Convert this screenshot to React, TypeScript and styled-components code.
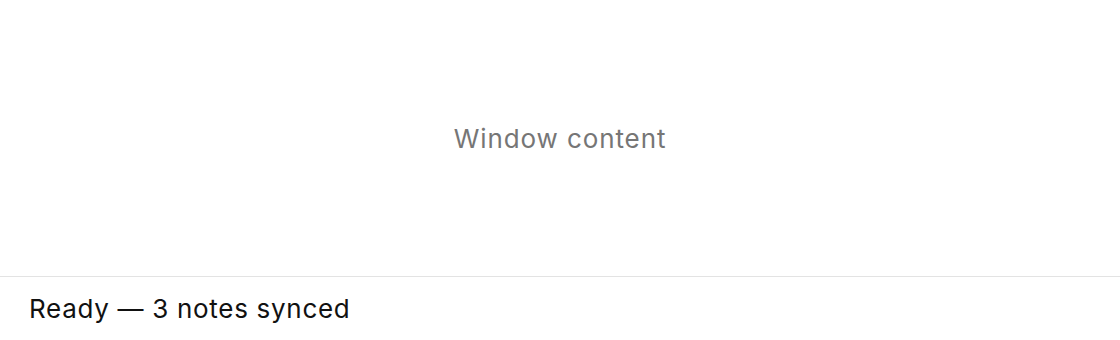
import React from "react";
import styled, { createGlobalStyle } from "styled-components";

const Global = createGlobalStyle`
  html, body { margin: 0; padding: 0; background: #ffffff; }
  body { font-family: Inter, "Noto Sans", sans-serif; -webkit-font-smoothing: antialiased; }
`;

const Window = styled.div`
  width: 1120px;
  height: 340px;
  display: flex;
  flex-direction: column;
  background: #ffffff;
`;

const Content = styled.main`
  height: 276px;
  display: flex;
  align-items: center;
  justify-content: center;
  font-size: 26px;
  letter-spacing: 0.9px;
  color: #767676;
`;

const StatusBar = styled.footer`
  flex: 1;
  border-top: 1px solid #e3e3e3;
  display: flex;
  align-items: center;
  padding: 0 29px;
  font-size: 26px;
  letter-spacing: 0.7px;
  color: #111111;
`;

export default function App() {
  return (
    <Window>
      <Global />
      <Content>Window content</Content>
      <StatusBar>Ready — 3 notes synced</StatusBar>
    </Window>
  );
}
